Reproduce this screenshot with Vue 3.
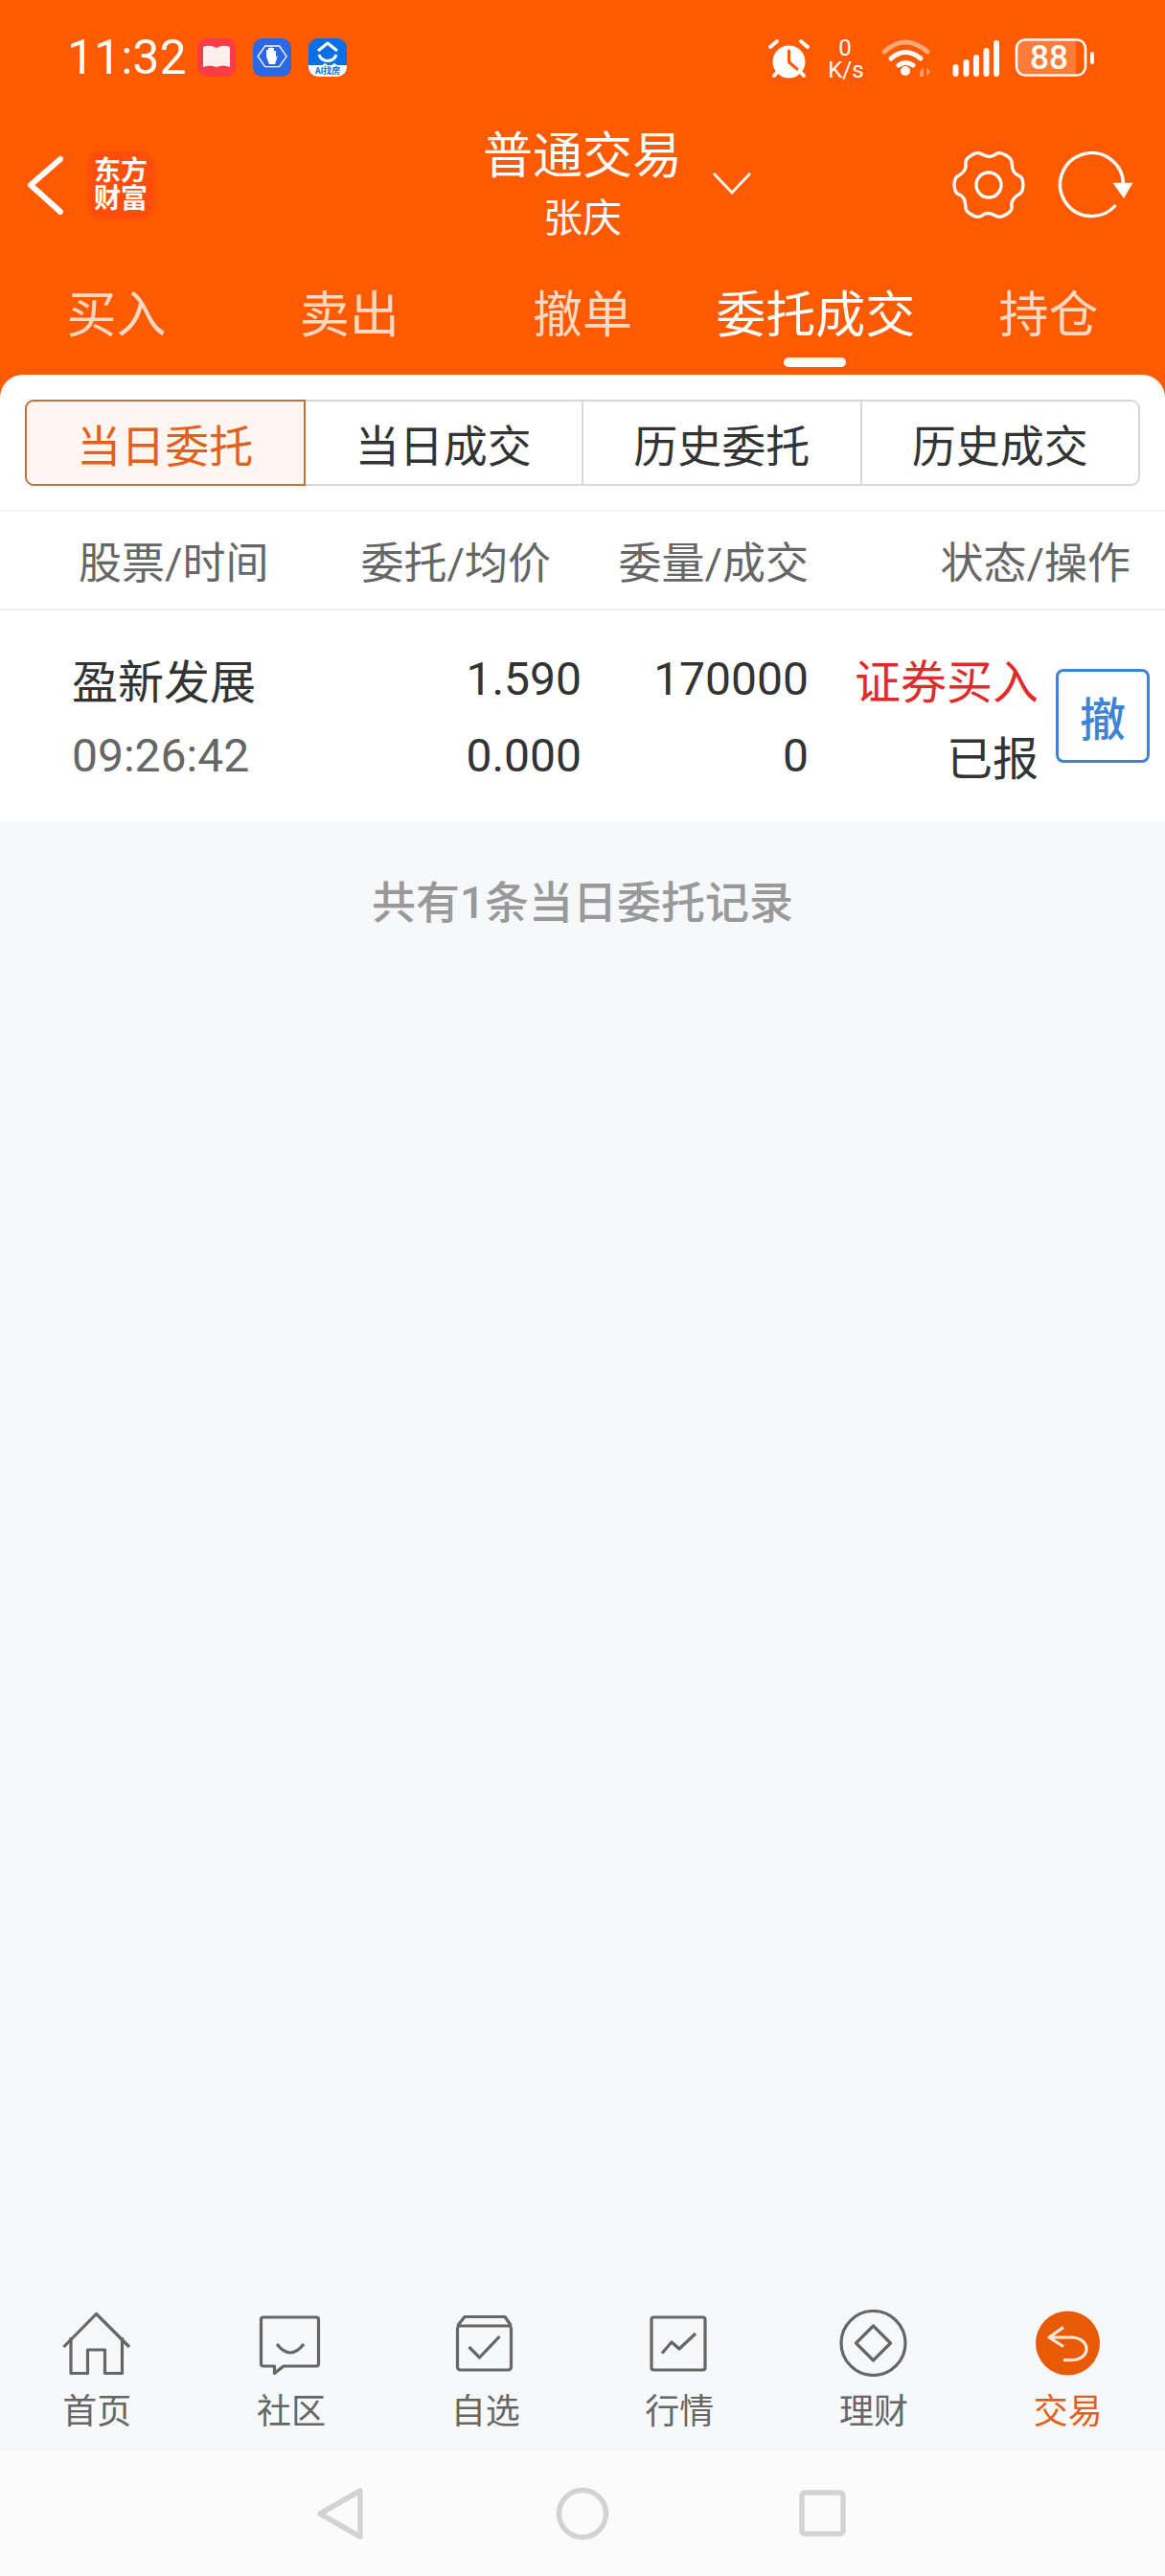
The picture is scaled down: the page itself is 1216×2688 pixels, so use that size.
<script setup>
const tabs = [
  { label: '买入' },
  { label: '卖出' },
  { label: '撤单' },
  { label: '委托成交', active: true },
  { label: '持仓' }
]
const segments = ['当日委托', '当日成交', '历史委托', '历史成交']
const navItems = ['首页', '社区', '自选', '行情', '理财', '交易']

// Six-lobed cog outline: each lobe is a flat rounded crown joined by a concave valley.
const polar = (radius, deg) => {
  const a = (deg * Math.PI) / 180
  return `${(40 + radius * Math.cos(a)).toFixed(1)} ${(40 + radius * Math.sin(a)).toFixed(1)}`
}
let gearPath = `M${polar(33, -17)}`
for (let k = 0; k < 6; k++) {
  const lobe = k * 60
  gearPath += `C${polar(38, lobe - 11)} ${polar(38, lobe + 11)} ${polar(33, lobe + 17)}`
  gearPath += `C${polar(30, lobe + 24)} ${polar(28, lobe + 36)} ${polar(33, lobe + 43)}`
}
gearPath += 'Z'
</script>

<template>
  <div class="screen">
    <header class="top">
      <div class="status">
        <div class="status-left">
          <span class="time">11:32</span>
          <svg class="app-icon" width="40" height="40" viewBox="0 0 40 40">
            <rect width="40" height="40" rx="10" fill="#fb3c47" />
            <path d="M6 9 Q13 6 20 10 Q27 6 34 9 L34 30 Q27 27 20 30 Q13 27 6 30Z" fill="#fff0ee" />
          </svg>
          <svg class="app-icon" width="40" height="40" viewBox="0 0 40 40">
            <rect width="40" height="40" rx="10" fill="#2a68e6" />
            <path d="M11 7 H29 L38 20 L29 33 H11 L2 20Z" transform="translate(3.5 2.2) scale(.83)" fill="none" stroke="#fff" stroke-width="1.6" />
            <path d="M14 19 V12 h2 V10 h2 V9.5 h2 V10 h2 V13 h2 V20 L26 18 L23 27 H17 Z" fill="#fff" />
          </svg>
          <svg class="app-icon" width="40" height="40" viewBox="0 0 40 40">
            <defs>
              <clipPath id="app3"><rect width="40" height="40" rx="10" /></clipPath>
            </defs>
            <g clip-path="url(#app3)">
              <rect width="40" height="40" fill="#0b6fe3" />
              <path d="M0 28 H14 L17 26 L20 28 H24 L27 26 L30 28 H40 V40 H0Z" fill="#fff" />
            </g>
            <path d="M10 13 L20 5 L30 13" fill="none" stroke="#fff" stroke-width="3" stroke-linejoin="round" />
            <path d="M11 17 A9.5 9.5 0 0 0 29 17" fill="none" stroke="#fff" stroke-width="3" />
            <text x="20" y="37" text-anchor="middle" class="app-text">AI找房</text>
          </svg>
        </div>
        <svg class="status-right" width="360" height="60" viewBox="0 0 360 60">
          <circle cx="28.5" cy="34.5" r="17" fill="#fff" />
          <path d="M28.5 23 V35 L37 42" fill="none" stroke="#ff5a00" stroke-width="3" stroke-linecap="round" stroke-linejoin="round" />
          <path d="M9 19 L16 13 M41 13 L48 19 M13 49 L17 44.5 M40 44.5 L44 49" stroke="#fff" stroke-width="4" stroke-linecap="round" />
          <text x="87" y="28" text-anchor="middle" class="speed">0</text>
          <text x="88" y="51" text-anchor="middle" class="speed">K/s</text>
          <path d="M128 24 Q150 4 173 24" fill="none" stroke="#ffa877" stroke-width="5" stroke-linecap="round" />
          <path d="M135 31 Q150 18 166 31" fill="none" stroke="#fff" stroke-width="5" stroke-linecap="round" />
          <path d="M143 38 Q150 33 158 38" fill="none" stroke="#fff" stroke-width="5" stroke-linecap="round" />
          <circle cx="150" cy="44" r="5" fill="#fff" />
          <path d="M165 45 L169 40 V50 H165Z M172 40 L176 45 H172Z M172 50 V45 H176Z" fill="#ff9d66" />
          <path d="M202.5 40 V47 M213.5 35 V47 M224 30 V47 M234.5 23 V47 M245 15 V47" stroke="#fff" stroke-width="6" stroke-linecap="round" />
          <path d="M275 13 H328 V47 H275 Q267 47 267 39 V21 Q267 13 275 13Z" fill="#ff7c38" />
          <rect x="266" y="11.5" width="72" height="37" rx="9" fill="none" stroke="#fff" stroke-width="2.6" />
          <path d="M345 26 V35" stroke="#fff" stroke-width="4" stroke-linecap="round" />
          <text x="300" y="42" text-anchor="middle" class="battery">88</text>
        </svg>
      </div>

      <div class="bar">
        <div class="bar-left">
          <svg width="40" height="64" viewBox="0 0 40 64">
            <path d="M35 5 L4 32 L35 60" fill="none" stroke="#fff" stroke-width="6" stroke-linecap="round" stroke-linejoin="round" />
          </svg>
          <div class="logo"><span>东方</span><span>财富</span></div>
        </div>
        <div class="title">
          <div class="title-main">普通交易</div>
          <div class="title-sub">张庆</div>
          <svg class="chevron" width="42" height="24" viewBox="0 0 42 24">
            <path d="M2 2 L21 22 L40 2" fill="none" stroke="#fff" stroke-width="2.6" />
          </svg>
        </div>
        <div class="bar-right">
          <svg width="80" height="80" viewBox="0 0 80 80">
            <path :d="gearPath" fill="none" stroke="#fff" stroke-width="3.4" />
            <circle cx="40" cy="40" r="13" fill="none" stroke="#fff" stroke-width="3.4" />
          </svg>
          <svg width="86" height="86" viewBox="0 0 86 86">
            <path d="M64.6 64 A33 33 0 1 1 72.5 42" fill="none" stroke="#fff" stroke-width="3.4" />
            <path d="M61.5 40.7 H82.5 L73 57Z" fill="#fff" />
          </svg>
        </div>
      </div>

      <nav class="tabs">
        <div v-for="tab in tabs" :key="tab.label" class="tab" :class="{ active: tab.active }">
          {{ tab.label }}
          <i v-if="tab.active" class="tab-line"></i>
        </div>
      </nav>
    </header>

    <main class="main">
      <section class="card">
        <div class="segments">
          <div v-for="(seg, i) in segments" :key="seg" class="segment" :class="{ on: i === 0 }">{{ seg }}</div>
        </div>
        <div class="thead">
          <span class="th-first">股票/时间</span>
          <span>委托/均价</span>
          <span>委量/成交</span>
          <span>状态/操作</span>
        </div>
        <div class="row">
          <div class="cells">
            <span class="name">盈新发展</span>
            <span>1.590</span>
            <span>170000</span>
            <span class="buy">证券买入</span>
            <span class="clock">09:26:42</span>
            <span>0.000</span>
            <span>0</span>
            <span>已报</span>
          </div>
          <div class="cancel">撤</div>
        </div>
      </section>
      <p class="note">共有1条当日委托记录</p>
    </main>

    <nav class="bottom">
      <div v-for="(item, i) in navItems" :key="item" class="nav-item" :class="{ current: i === 5 }">
        <svg width="80" height="70" viewBox="0 0 80 70" class="nav-icon">
          <g v-if="i === 0">
            <path d="M5.5 39 L39.5 4.5 L74 39" />
            <path d="M13 29 V66.5 H30.5 V42 H48.5 V66.5 H66.5 V29" />
          </g>
          <g v-else-if="i === 1">
            <path d="M11 8 H66 a2.5 2.5 0 0 1 2.5 2.5 V56.5 a2.5 2.5 0 0 1 -2.5 2.5 H32 L22.5 66.5 V59 H11 a2.5 2.5 0 0 1 -2.5 -2.5 V10.5 A2.5 2.5 0 0 1 11 8Z" />
            <path d="M25 36 Q39 54 53 36" />
          </g>
          <g v-else-if="i === 2">
            <rect x="10.5" y="17" width="56" height="46" rx="3" />
            <path d="M10.5 17 L18 7.5 H60 L66.5 17" />
            <path d="M22.5 39 L33.5 50 L54.5 28" />
          </g>
          <g v-else-if="i === 3">
            <rect x="11" y="8" width="56" height="55" rx="2.5" />
            <path d="M22 45.5 L32 34 L40 41 L57 25" />
          </g>
          <g v-else-if="i === 4">
            <circle cx="39.5" cy="35" r="33.5" />
            <path d="M39.5 17 L57.5 35 L39.5 53 L21.5 35Z" />
          </g>
          <g v-else>
            <circle cx="39.5" cy="35" r="33.5" class="solid" />
            <path d="M35 18.5 L20 29 L35 38.5 M20 29 H43 C52 29 59 34 59 41 C59 48 52 52.7 43 52.7 H35" class="light" />
          </g>
        </svg>
        <span class="nav-label">{{ item }}</span>
      </div>
    </nav>

    <footer class="system">
      <svg width="54" height="60" viewBox="0 0 54 60">
        <path d="M48 6 V54 L6 30Z" fill="none" stroke="#d3d3d3" stroke-width="5.5" stroke-linejoin="round" />
      </svg>
      <svg width="56" height="60" viewBox="0 0 56 60">
        <circle cx="28" cy="30" r="24.5" fill="none" stroke="#d3d3d3" stroke-width="5.5" />
      </svg>
      <svg width="50" height="60" viewBox="0 0 50 60">
        <rect x="3" y="8" width="43" height="43" rx="3" fill="none" stroke="#d3d3d3" stroke-width="5.5" />
      </svg>
    </footer>
  </div>
</template>

<style scoped>
.screen {
  width: 1216px;
  height: 2688px;
  display: flex;
  flex-direction: column;
  background: #f7f8fa;
  font-family: Roboto, "Noto Sans CJK SC", sans-serif;
  overflow: hidden;
}
.top {
  background: #ff5a00;
  color: #fff;
}
.status {
  height: 120px;
  display: flex;
  align-items: center;
  justify-content: space-between;
  padding: 0 61px 0 70px;
}
.status-left {
  display: flex;
  align-items: center;
}
.time {
  font-size: 50px;
  width: 136px;
}
.app-icon {
  margin-right: 18px;
}
.app-text {
  font-size: 9px;
  font-weight: 700;
  fill: #0b6fe3;
}
.speed {
  font-size: 24px;
  fill: #fff;
}
.battery {
  font-size: 35px;
  font-weight: 500;
  fill: #fff;
}
.bar {
  height: 146px;
  display: grid;
  grid-template-columns: 1fr auto 1fr;
  align-items: center;
}
.bar-left {
  display: flex;
  align-items: center;
  padding-left: 28px;
  gap: 22px;
}
.logo {
  width: 72px;
  height: 72px;
  border-radius: 18px;
  background: #ff4d0a;
  display: flex;
  flex-direction: column;
  align-items: center;
  justify-content: center;
  font-size: 28px;
  font-weight: 700;
  line-height: 29px;
}
.title {
  position: relative;
  text-align: center;
  padding-top: 6px;
}
.title-main {
  font-size: 52px;
  line-height: 64px;
  white-space: nowrap;
}
.title-sub {
  font-size: 41px;
  line-height: 64px;
}
.chevron {
  position: absolute;
  left: 239px;
  top: 53px;
}
.bar-right {
  display: flex;
  align-items: center;
  justify-content: flex-end;
  padding-right: 30px;
  gap: 28px;
}
.tabs {
  height: 125px;
  display: grid;
  grid-template-columns: repeat(5, 1fr);
}
.tab {
  position: relative;
  text-align: center;
  font-size: 52px;
  line-height: 128px;
  color: #ffd8c2;
}
.tab.active {
  color: #fff;
}
.tab-line {
  position: absolute;
  left: 50%;
  bottom: 11px;
  width: 65px;
  height: 10px;
  margin-left: -33px;
  border-radius: 5px;
  background: #fff;
}
.main {
  flex: 1;
  background: #f7f8fa;
}
.card {
  background: #fff;
  border-radius: 24px 24px 0 0;
  padding-top: 26px;
  box-shadow: 0 -24px 0 #ff5a00;
}
.segments {
  display: flex;
  margin: 0 26px;
  height: 90px;
}
.segment {
  flex: 1;
  display: flex;
  align-items: center;
  justify-content: center;
  font-size: 46px;
  color: #333;
  border: 2px solid #d8d8d8;
  border-left: 0;
}
.segment:first-child {
  border-radius: 9px 0 0 9px;
}
.segment:last-child {
  border-radius: 0 9px 9px 0;
}
.segment.on {
  color: #e2601a;
  background: #fff6f1;
  border: 2px solid #bd7242;
}
.thead {
  margin-top: 25px;
  height: 105px;
  box-sizing: border-box;
  border-top: 2px solid #f4f4f4;
  border-bottom: 2px solid #eeeeee;
  display: grid;
  grid-template-columns: 282px 293px 269px 336px;
  align-items: center;
  font-size: 45px;
  color: #666;
  text-align: right;
}
.th-first {
  text-align: left;
  padding-left: 82px;
  white-space: nowrap;
}
.row {
  height: 220px;
  display: flex;
  align-items: center;
  padding-left: 75px;
}
.cells {
  display: grid;
  grid-template-columns: 230px 302px 237px 240px;
  grid-auto-rows: 80px;
  align-items: center;
  text-align: right;
  font-size: 48px;
  color: #333;
  margin-top: 2px;
  white-space: nowrap;
}
.name,
.clock {
  text-align: left;
}
.clock {
  color: #666;
}
.buy {
  color: #e02b2b;
}
.cancel {
  width: 98px;
  height: 98px;
  box-sizing: border-box;
  margin-left: 18px;
  border: 3px solid #3f84d2;
  border-radius: 8px;
  display: flex;
  align-items: center;
  justify-content: center;
  color: #3f84d2;
  font-size: 48px;
  font-weight: 500;
}
.note {
  margin: 50px 0 0;
  line-height: 70px;
  text-align: center;
  font-size: 46px;
  font-weight: 500;
  color: #999;
}
.bottom {
  display: grid;
  grid-template-columns: repeat(6, 1fr);
  height: 148px;
  background: #f7f8fa;
}
.nav-item {
  display: flex;
  flex-direction: column;
  align-items: center;
}
.nav-icon {
  display: block;
  fill: none;
  stroke: #666;
  stroke-width: 3.2;
  stroke-linejoin: round;
}
.solid {
  fill: #e85a06;
  stroke: none;
}
.light {
  stroke: #ffeadb;
  fill: none;
}
.nav-label {
  margin-top: 14px;
  font-size: 36px;
  line-height: 46px;
  color: #666;
}
.current .nav-label {
  color: #e2601a;
}
.system {
  height: 130px;
  display: flex;
  align-items: center;
  justify-content: center;
  gap: 198px;
  background: #fbfbfb;
  padding: 0 4px 0 0;
  box-sizing: border-box;
}
</style>
